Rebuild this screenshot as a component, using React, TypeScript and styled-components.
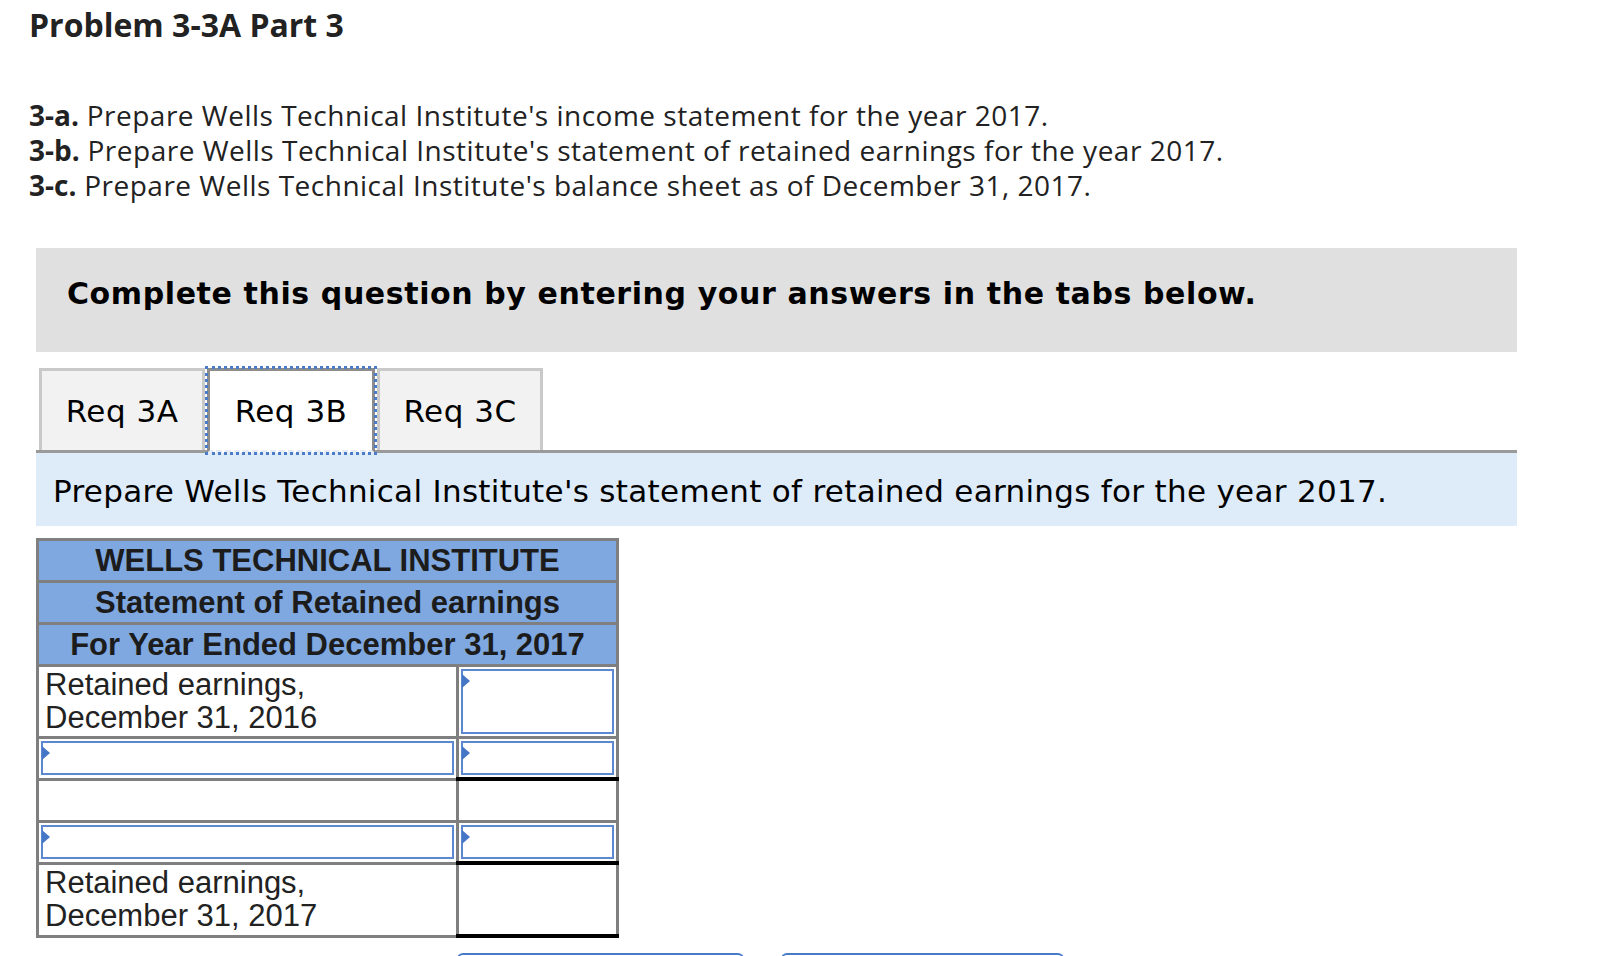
import React from 'react'
import styled, { createGlobalStyle } from 'styled-components'

const GlobalStyle = createGlobalStyle`
  html, body {
    margin: 0;
    padding: 0;
    height: 956px;
    overflow: hidden;
    background: #ffffff;
  }
`

const Page = styled.div`
  padding-top: 6px;
`

const Title = styled.h1`
  margin: 0;
  padding-left: 29px;
  font-family: 'Open Sans', sans-serif;
  font-weight: 700;
  font-size: 32px;
  line-height: 38px;
  color: #222222;
`

const Intro = styled.div`
  margin-top: 54px;
  padding-left: 29px;
  font-family: 'Open Sans', sans-serif;
  font-size: 28px;
  letter-spacing: 0.5px;
  line-height: 35px;
  color: #222222;

  b {
    font-weight: 700;
    letter-spacing: 0;
  }
`

const Panel = styled.div`
  margin: 45px 0 0 36px;
  width: 1481px;
  font-family: 'DejaVu Sans', Verdana, sans-serif;
`

const Banner = styled.div`
  box-sizing: border-box;
  height: 104px;
  padding: 28px 31px 0;
  background: #e0e0e0;
  font-weight: 700;
  font-size: 30px;
  letter-spacing: 0.6px;
  line-height: 36px;
  color: #000000;
`

const TabList = styled.div`
  display: flex;
  gap: 2px;
  margin-top: 16px;
  padding-left: 3px;
  border-bottom: 3px solid #9a9a9a;
`

const Tab = styled.button<{ $active?: boolean }>`
  box-sizing: border-box;
  width: ${({ $active }) => ($active ? '168px' : '166px')};
  height: ${({ $active }) => ($active ? '85px' : '82px')};
  margin-bottom: ${({ $active }) => ($active ? '-3px' : '0')};
  padding: 0;
  font-family: 'DejaVu Sans', Verdana, sans-serif;
  font-size: 31px;
  letter-spacing: 0.5px;
  color: #000000;
  background: ${({ $active }) => ($active ? '#ffffff' : '#f2f2f2')};
  border: 3px solid ${({ $active }) => ($active ? '#8c8c8c' : '#c9c9c9')};
  border-bottom: ${({ $active }) =>
    $active ? '3px dashed #e6ecf6' : 'none'};
  outline: ${({ $active }) => ($active ? '3px dotted #4a7cc9' : 'none')};
  outline-offset: -1px;
  cursor: pointer;
`

const Instruction = styled.div`
  box-sizing: border-box;
  height: 73px;
  padding: 0 17px;
  background: #deebf8;
  font-size: 31px;
  letter-spacing: 0.3px;
  line-height: 76px;
  color: #000000;
`

const Sheet = styled.table`
  margin-top: 12px;
  width: 583px;
  border-collapse: collapse;
  border: 3px solid #7f7f7f;
  font-family: 'Liberation Sans', Arial, sans-serif;
  color: #222222;
`

const HeadCell = styled.th`
  height: 39px;
  padding: 0;
  border: 3px solid #7f7f7f;
  background: #7fa8e0;
  font-size: 31px;
  font-weight: 700;
  line-height: 36px;
  text-align: center;
  color: #1c1c1c;
`

const LabelCell = styled.td<{ $tall?: boolean }>`
  width: 405px;
  height: ${({ $tall }) => ($tall ? '67px' : '37px')};
  padding: 0 6px 2px;
  border: 3px solid #7f7f7f;
  font-size: 31px;
  line-height: 33px;
  vertical-align: middle;
`

const InputCell = styled.td<{ $tall?: boolean; $total?: boolean }>`
  height: ${({ $tall }) => ($tall ? '65px' : '34px')};
  padding: 2px;
  border: 3px solid #7f7f7f;
  border-bottom: ${({ $total }) =>
    $total ? '4px solid #000000' : '3px solid #7f7f7f'};
  vertical-align: top;
`

const EmptyCell = styled.td<{ $tall?: boolean; $total?: boolean }>`
  height: ${({ $tall }) => ($tall ? '69px' : '39px')};
  padding: 0;
  border: 3px solid #7f7f7f;
  border-bottom: ${({ $total }) =>
    $total ? '4px solid #000000' : '3px solid #7f7f7f'};
`

const Field = styled.div<{ $tall?: boolean }>`
  position: relative;
  box-sizing: border-box;
  height: ${({ $tall }) => ($tall ? '65px' : '34px')};
  border: 2px solid #5b88d0;
  background: #ffffff;

  &::before {
    content: '';
    position: absolute;
    top: 3px;
    left: -1px;
    border-style: solid;
    border-width: 7px 0 7px 8px;
    border-color: transparent transparent transparent #4677c6;
  }
`

const NavRow = styled.div`
  display: flex;
  gap: 37px;
  margin: 15px 0 0 421px;
`

const NavButton = styled.button<{ $width: number }>`
  width: ${({ $width }) => `${$width}px`};
  height: 64px;
  border: 2px solid #4a7bc8;
  border-radius: 6px;
  background: #ffffff;
  font-family: 'DejaVu Sans', Verdana, sans-serif;
  font-size: 26px;
  color: #1e5bb8;
`

const tabs = ['Req 3A', 'Req 3B', 'Req 3C']

export default function App() {
  return (
    <>
      <GlobalStyle />
      <Page>
        <Title>Problem 3-3A Part 3</Title>
        <Intro>
          <div>
            <b>3-a.</b> Prepare Wells Technical Institute's income statement for the year 2017.
          </div>
          <div>
            <b>3-b.</b> Prepare Wells Technical Institute's statement of retained earnings for the year 2017.
          </div>
          <div>
            <b>3-c.</b> Prepare Wells Technical Institute's balance sheet as of December 31, 2017.
          </div>
        </Intro>
        <Panel>
          <Banner>Complete this question by entering your answers in the tabs below.</Banner>
          <TabList>
            {tabs.map((t) => (
              <Tab key={t} $active={t === 'Req 3B'}>
                {t}
              </Tab>
            ))}
          </TabList>
          <Instruction>
            Prepare Wells Technical Institute's statement of retained earnings for the year 2017.
          </Instruction>
          <Sheet>
            <thead>
              <tr>
                <HeadCell colSpan={2}>WELLS TECHNICAL INSTITUTE</HeadCell>
              </tr>
              <tr>
                <HeadCell colSpan={2}>Statement of Retained earnings</HeadCell>
              </tr>
              <tr>
                <HeadCell colSpan={2}>For Year Ended December 31, 2017</HeadCell>
              </tr>
            </thead>
            <tbody>
              <tr>
                <LabelCell $tall>
                  Retained earnings,
                  <br />
                  December 31, 2016
                </LabelCell>
                <InputCell $tall>
                  <Field $tall />
                </InputCell>
              </tr>
              <tr>
                <InputCell>
                  <Field />
                </InputCell>
                <InputCell $total>
                  <Field />
                </InputCell>
              </tr>
              <tr>
                <EmptyCell />
                <EmptyCell />
              </tr>
              <tr>
                <InputCell>
                  <Field />
                </InputCell>
                <InputCell $total>
                  <Field />
                </InputCell>
              </tr>
              <tr>
                <LabelCell $tall>
                  Retained earnings,
                  <br />
                  December 31, 2017
                </LabelCell>
                <EmptyCell $tall $total />
              </tr>
            </tbody>
          </Sheet>
          <NavRow>
            <NavButton $width={287}>&lt; Req 3A</NavButton>
            <NavButton $width={283}>Req 3C &gt;</NavButton>
          </NavRow>
        </Panel>
      </Page>
    </>
  )
}
